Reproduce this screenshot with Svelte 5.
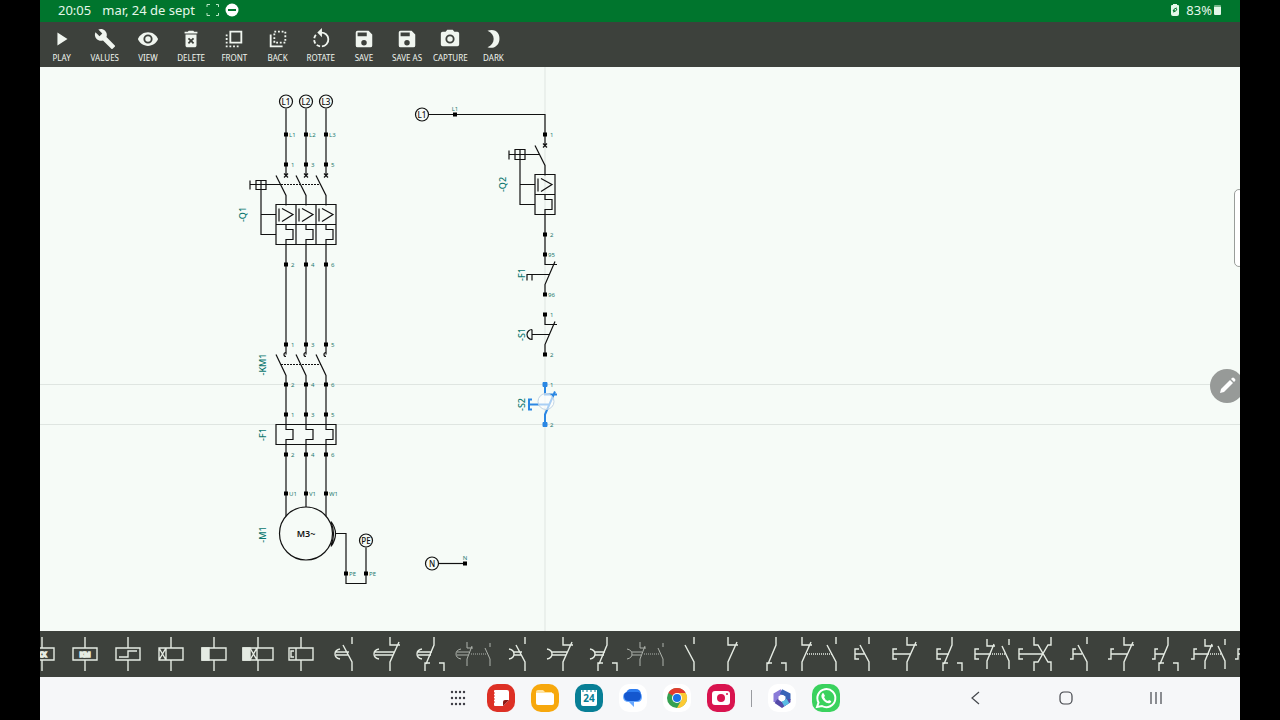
<script lang="ts">
    type Terminal = { x: number; y: number; label: string; above?: boolean };
    type Glyph = { d: string; thin?: boolean; dots?: string; fill?: string; text?: string; tx?: number };

    const phases = [286, 306, 326];

    // One row of terminals, a label for each phase
    function row(y: number, labels: string[]): Terminal[] {
        return labels.map((label, i) => ({ x: phases[i], y, label }));
    }

    const terminals: Terminal[] = [
        ...row(134, ["L1", "L2", "L3"]),
        ...row(164, ["1", "3", "5"]),
        ...row(264, ["2", "4", "6"]),
        ...row(344, ["1", "3", "5"]),
        ...row(384, ["2", "4", "6"]),
        ...row(414, ["1", "3", "5"]),
        ...row(454, ["2", "4", "6"]),
        ...row(493, ["U1", "V1", "W1"]),
        { x: 346, y: 573, label: "PE" },
        { x: 366, y: 573, label: "PE" },
        { x: 455, y: 114, label: "L1", above: true },
        { x: 465, y: 563, label: "N", above: true },
        { x: 545, y: 134, label: "1" },
        { x: 545, y: 234, label: "2" },
        { x: 545, y: 254, label: "95" },
        { x: 545, y: 294, label: "96" },
        { x: 545, y: 314, label: "1" },
        { x: 545, y: 354, label: "2" },
    ];

    const sources = [
        { x: 286, y: 101, label: "L1" },
        { x: 306, y: 101, label: "L2" },
        { x: 326, y: 101, label: "L3" },
        { x: 422, y: 114, label: "L1" },
        { x: 366, y: 540, label: "PE" },
        { x: 432, y: 563, label: "N" },
    ];

    const names = [
        { x: 246, y: 214, label: "-Q1" },
        { x: 266, y: 364, label: "-KM1" },
        { x: 266, y: 434, label: "-F1" },
        { x: 266, y: 534, label: "-M1" },
        { x: 506, y: 184, label: "-Q2" },
        { x: 525, y: 274, label: "-F1" },
        { x: 525, y: 334, label: "-S1" },
        { x: 525, y: 404, label: "-S2" },
    ];

    const tools = [
        "Play", "Values", "View", "Delete", "Front", "Back",
        "Rotate", "Save", "Save as", "Capture", "Dark",
    ];

    // Contact shapes for the palette, drawn around 0,0
    const open = (x: number) => `M${x} -17V-10M${x - 9} -9L${x} 8V17`;
    const closed = (x: number) => `M${x} -17V-9H${x + 10}M${x + 9} -12L${x} 8V17`;
    const change = (x: number) =>
        `M${x} -17V-9L${x - 8} 10M${x - 4} 9H${x - 9}V17M${x + 5} 9H${x + 10}V17`;
    const delayOn = (x: number, to: number) =>
        `M${x + 5} -5Q${x} -4 ${x} 0Q${x} 4 ${x + 5} 5M${x + 1} -2H${to + 1}M${x + 1} 1H${to}`;
    const delayOff = (x: number, to: number) =>
        `M${x} -5Q${x + 5} -4 ${x + 5} 0Q${x + 5} 4 ${x} 5M${x + 5} -2H${to + 1}M${x + 5} 1H${to}`;
    const push = (x: number, to: number) => `M${x + 4} -5H${x}V5H${x + 4}M${x} 0H${to}`;
    const turn = (x: number, to: number) => `M${x + 5} -5H${x + 2}V5H${x - 1}M${x + 2} 0H${to}`;
    const smallPair =
        "M-6 -12V-6H0M-1 -8L-6 5V12M17 -11V-7M12 -6L17 5V12";
    const midPair = (x: number) =>
        `M${x} -15V-8H${x + 8}M${x + 7} -10L${x} 7V15M17 -15V-9M10 -8L17 7V15`;
    const coil = "M-12 -6H12V6H-12ZM0 -17V-6M0 6V17";

    const palette: Glyph[] = [
        { d: coil, text: "KX", tx: 0 },
        { d: coil, text: "KM", tx: 0 },
        { d: coil + "M-9 3H0V-3H9" },
        { d: coil + "M-5 -6V6M-12 -6L-5 6M-5 -6L-12 6" },
        { d: coil, fill: "M-12 -6H-5V6H-12Z" },
        {
            d: "M-15 -6H15V6H-15ZM0 -17V-6M0 6V17M-1 -6V6M-8 -6L-1 6M-1 -6L-8 6",
            fill: "M-15 -6H-8V6H-15Z",
        },
        { d: coil + "M-5 -6V6M-7 -3H-10V3H-7" },
        { d: open(8) + delayOn(-9, 4) },
        { d: closed(3) + delayOn(-13, 6) },
        { d: change(4) + delayOn(-13, 1) },
        { d: smallPair + delayOn(-17, -5), thin: true, dots: "M-2 0H14" },
        { d: open(8) + delayOff(-8, 4) },
        { d: closed(3) + delayOff(-13, 6) },
        { d: change(4) + delayOff(-13, 1) },
        { d: smallPair + delayOff(-19, -5), thin: true, dots: "M-2 0H14" },
        { d: open(5) },
        { d: closed(-5) },
        { d: change(0) },
        { d: closed(-17) + open(17), dots: "M-12 0H13" },
        { d: open(7) + push(-7, 3) },
        { d: closed(2) + push(-12, 6) },
        { d: change(3) + push(-12, 0) },
        { d: midPair(-5) + push(-17, -1), dots: "M0 0H13" },
        {
            d: push(-16, 8) +
                "M-1 -17V-9H3L13 8H16V17M16 -17V-9H13L3 8H-1V17",
        },
        { d: open(9) + turn(-7, 4) },
        { d: closed(3) + turn(-12, 7) },
        { d: change(4) + turn(-11, 0) },
        { d: midPair(-3) + turn(-16, 1), dots: "M2 0H13" },
        { d: open(9) + turn(-15, 4) },
    ];
</script>

<svelte:head>
    <title>Circuit editor</title>
</svelte:head>

{#snippet thermal(x: number, y: number)}
    <path d="M{x} {y}v5h7v10h-7v5" />
{/snippet}

{#snippet trip(x: number, y: number)}
    <path d="M{x - 7} {y + 4}v13M{x - 4} {y + 4}l11 6l-11 7" />
{/snippet}

<div class="screen">
    <header class="status">
        <span>20:05</span>
        <span class="date">mar, 24 de sept</span>
        <svg width="14" height="14" viewBox="0 0 14 14" fill="none" stroke="#b9e6c5">
            <path d="M1 4V1.5H4M10 1.5H12.500V4M12.500 10V12.500H10M4 12.500H1V10" />
        </svg>
        <svg width="14" height="14" viewBox="0 0 14 14">
            <circle cx="7" cy="7" r="6.500" fill="#fff" />
            <path d="M3 7H11" stroke="#00752d" stroke-width="2" />
        </svg>
        <span class="battery">
            <svg width="8" height="12" viewBox="0 0 8 12">
                <path d="M2 0H6V1H7Q8 1 8 2V10Q8 12 6 12H2Q0 12 0 10V2Q0 1 1 1H2Z" fill="#e4f7e9" />
                <path d="M6 4Q3 4 2 7L4 6M2 8Q5 8 6 5" stroke="#00752d" fill="none" />
            </svg>
            83%
            <svg class="cell" width="8" height="12" viewBox="0 0 8 12">
                <path d="M1 1H6Q7 1 7 2V4H0V2Q0 1 1 1Z" fill="#79b98c" />
                <path d="M0 3H7V10Q7 11 6 11H1Q0 11 0 10Z" fill="#e4f7e9" />
            </svg>
        </span>
    </header>

    <nav class="toolbar">
        {#each tools as tool}
            <button>
                <svg width="22" height="22" viewBox="0 0 24 24" fill="currentColor">
                    {#if tool === "Play"}
                        <path d="M7 5V19L18 12Z" />
                    {:else if tool === "Values"}
                        <path d="M22.700 19L13.600 9.900C14.500 7.600 14 4.900 12.100 3C10.100 1 7.100 .6 4.700 1.700L9 6L6 9L1.600 4.700C.4 7.100 .9 10.100 2.900 12.100C4.800 14 7.500 14.500 9.800 13.600L18.900 22.700C19.300 23.100 19.900 23.100 20.300 22.700L22.600 20.400C23.100 20 23.100 19.300 22.700 19Z" />
                    {:else if tool === "View"}
                        <path d="M12 4.500C7 4.500 2.700 7.600 1 12C2.700 16.400 7 19.500 12 19.500S21.300 16.400 23 12C21.300 7.600 17 4.500 12 4.500ZM12 17A5 5 0 1 1 12 7A5 5 0 0 1 12 17ZM12 9A3 3 0 1 0 12 15A3 3 0 0 0 12 9Z" fill-rule="evenodd" />
                    {:else if tool === "Delete"}
                        <path d="M6 19C6 20.100 6.900 21 8 21H16C17.100 21 18 20.100 18 19V7H6ZM8.500 11.900L9.900 10.500L12 12.600L14.100 10.500L15.500 11.900L13.400 14L15.500 16.100L14.100 17.500L12 15.400L9.900 17.500L8.500 16.100L10.600 14ZM15.500 4L14.500 3H9.500L8.500 4H5V6H19V4Z" fill-rule="evenodd" />
                    {:else if tool === "Front"}
                        <path d="M8 4H20V16H8Z" fill="none" stroke="currentColor" stroke-width="2" />
                        <path d="M4 7V20H18" fill="none" stroke="currentColor" stroke-width="2" stroke-dasharray="2 2" />
                    {:else if tool === "Back"}
                        <path d="M8 4H20V16H8Z" fill="none" stroke="currentColor" stroke-width="2" stroke-dasharray="2 2" />
                        <path d="M4 7V20H17" fill="none" stroke="currentColor" stroke-width="2" />
                    {:else if tool === "Rotate"}
                        <path d="M12 5A7.500 7.500 0 0 1 13 20" fill="none" stroke="currentColor" stroke-width="2" />
                        <path d="M11 20A7.500 7.500 0 0 1 7 7" fill="none" stroke="currentColor" stroke-width="2" stroke-dasharray="4 2" />
                        <path d="M13 0V10L8 5Z" />
                    {:else if tool === "Save" || tool === "Save as"}
                        <path d="M17 3H5A2 2 0 0 0 3 5V19A2 2 0 0 0 5 21H19A2 2 0 0 0 21 19V7ZM12 19A3 3 0 1 1 12 13A3 3 0 0 1 12 19ZM15 9H5V5H15Z" fill-rule="evenodd" />
                    {:else if tool === "Capture"}
                        <path d="M9 2L7.200 4H4A2 2 0 0 0 2 6V18A2 2 0 0 0 4 20H20A2 2 0 0 0 22 18V6A2 2 0 0 0 20 4H16.800L15 2ZM12 17A5 5 0 1 1 12 7A5 5 0 0 1 12 17ZM12 9A3 3 0 1 0 12 15A3 3 0 0 0 12 9Z" fill-rule="evenodd" />
                    {:else}
                        <path d="M6 3C15 0 20 6 19 13C18 20 12 23 6 21C15 17 15 7 6 3Z" />
                    {/if}
                </svg>
                <span>{tool}</span>
            </button>
        {/each}
    </nav>

    <main class="canvas">
        <svg class="drawing" width="100%" height="100%">
            <g transform="translate(-40 -66.5)">
                <path class="guide" d="M545 60V1600M0 384H3000M0 424H3000" />

                <g class="wire">
                    <!-- power circuit -->
                    {#each phases as x}
                        <path d="M{x} 108V175M{x - 2} 173l4 4m0 -4l-4 4" />
                        <path d="M{x - 10} 175L{x} 195V205M{x} 244V354" />
                        <path d="M{x - 10} 354L{x} 375V424M{x} 444V516" />
                        <path d="M{x} 352a2 2 0 1 0 0 4" />
                        {@render trip(x, 204)}
                        {@render thermal(x, 224)}
                        {@render thermal(x, 424)}
                    {/each}
                    <path d="M276 204H336V244H276ZM276 224H336M296 204V244M316 204V244" />
                    <path d="M250 180V189M250 184H281M256 180H266V189H256ZM261 180V234H276M261 214H276" />
                    <path class="dotted" d="M281 184H321M281 364H321" />
                    <path d="M276 424H336V444H276Z" />
                    <path d="M331 521Q340 533 331 546M331 522Q336 533 331 545M335 533H346V583H366V547" />

                    <!-- control circuit -->
                    <path d="M429 114H545V145M543 143l4 4m0 -4l-4 4" />
                    <path d="M535 145L545 165V175M545 214V264H557" />
                    <path d="M535 174H555V214H535ZM535 194H555" />
                    {@render trip(545, 174)}
                    {@render thermal(545, 194)}
                    <path d="M509 150V159M509 154H540M515 149H525V159H515ZM520 149V204H535M520 184H535" />
                    <path d="M555 261L545 284V294M550 274H527V280M532 274V280" />
                    <path d="M545 314V324H557M555 321L545 344V354M550 334H532" />
                    <path d="M532 329V339A5 5 0 0 1 532 329" />
                    <path d="M439 563H465" />
                </g>

                <circle class="motor" cx="306" cy="533" r="26.500" />
                <text class="motor-label" x="306" y="536">M3~</text>

                <g class="selected">
                    <path d="M545 384V394H557M555 391L545 414V424M549 404H529M532 399H529V409H532" />
                    <path class="end" d="M543 382h4v4h-4zM543 422h4v4h-4z" />
                    <text class="pin" x="550" y="386">1</text>
                    <text class="pin" x="550" y="426">2</text>
                    <circle cx="546" cy="401" r="8" />
                </g>

                {#each terminals as t}
                    <rect x={t.x - 2} y={t.y - 2} width="4" height="4" />
                    {#if t.above}
                        <text class="pin middle" x={t.x} y={t.y - 4}>{t.label}</text>
                    {:else}
                        <text class="pin" x={t.x + (t.label.length > 1 ? 3 : 5)} y={t.y + 2}>{t.label}</text>
                    {/if}
                {/each}

                {#each sources as s}
                    <circle class="source" cx={s.x} cy={s.y} r="6.500" />
                    <text class="source-label" x={s.x} y={s.y + 3}>{s.label}</text>
                {/each}

                {#each names as n}
                    <text class="name" transform="translate({n.x} {n.y}) rotate(-90)">{n.label}</text>
                {/each}
            </g>
        </svg>

        <div class="edge-handle"></div>
        <button class="pen" aria-label="Edit">
            <svg width="20" height="20" viewBox="0 0 20 20">
                <path d="M3 17L4 13L13 4L16 7L7 16Z" fill="#fff" />
                <path d="M14 3L15 2Q16 1 17 2L18 3Q19 4 18 5L17 6Z" fill="#fff" />
            </svg>
        </button>
    </main>

    <nav class="palette">
        {#each palette as p, i}
            <button aria-label="Symbol {i + 1}">
                <svg class:thin={p.thin} width="44" height="44" viewBox="-22 -22 44 44">
                    {#if p.fill}<path class="solid" d={p.fill} />{/if}
                    <path d={p.d} />
                    {#if p.dots}<path class="dots" d={p.dots} />{/if}
                    {#if p.text}<text x={p.tx} y="3">{p.text}</text>{/if}
                </svg>
            </button>
        {/each}
    </nav>

    <footer class="dock">
        <div class="apps">
            <button class="drawer" aria-label="All apps">
                <svg width="16" height="16" viewBox="0 0 16 16" fill="#3c3c44">
                    {#each [2, 8, 14] as cy}
                        {#each [2, 6, 10, 14] as cx}
                            <circle {cx} {cy} r="1.200" />
                        {/each}
                    {/each}
                </svg>
            </button>
            <button class="app notes" aria-label="Notes">
                <svg width="28" height="28" viewBox="0 0 28 28">
                    <path d="M8 6H20Q22 6 22 8V16L16 22H8Q7 22 7 21V7Q7 6 8 6Z" fill="#fff" />
                    <path d="M22 16L16 22V18Q16 16 18 16Z" fill="#8d1914" />
                    <path d="M6 9H8M6 12H8M6 15H8M6 18H8" stroke="#dd3025" />
                </svg>
            </button>
            <button class="app files" aria-label="Files">
                <svg width="28" height="28" viewBox="0 0 28 28">
                    <path d="M7 6H12L14 8H21V12H5V8Q5 6 7 6Z" fill="#ffe3a0" />
                    <path d="M5 9H21Q23 9 23 11V19Q23 21 21 21H7Q5 21 5 19Z" fill="#fff" />
                </svg>
            </button>
            <button class="app calendar" aria-label="Calendar">
                <svg width="28" height="28" viewBox="0 0 28 28">
                    <path d="M6 6H22V20Q22 22 20 22H8Q6 22 6 20Z" fill="#fff" />
                    <path d="M8 5V8M12 5V8M16 5V8M20 5V8" stroke="#087f96" />
                    <text x="14" y="18">24</text>
                </svg>
            </button>
            <button class="app plain" aria-label="Messages">
                <svg width="28" height="28" viewBox="0 0 28 28">
                    <rect x="7" y="5" width="15" height="11" rx="5" fill="#2d7cf0" />
                    <path d="M10 8H18Q23 8 23 13Q23 18 18 18H15V23L10 18Q4 18 4 13Q4 8 10 8Z" fill="#68a8ff" />
                    <path d="M9 8H19Q22 8 22 12Q22 17 17 17H10Q5 17 5 12Q5 8 9 8Z" fill="#1457cf" />
                </svg>
            </button>
            <button class="app plain" aria-label="Chrome">
                <svg width="28" height="28" viewBox="0 0 28 28">
                    <circle cx="14" cy="14" r="10" fill="#34a050" />
                    <path d="M14 14L5.300 9A10 10 0 0 1 22.700 9Z" fill="#e33b2e" />
                    <path d="M14 9H22.700A10 10 0 0 1 14 24L18.500 16Z" fill="#fcc934" />
                    <circle cx="14" cy="14" r="5" fill="#fff" />
                    <circle cx="14" cy="14" r="4" fill="#1a73e8" />
                </svg>
            </button>
            <button class="app camera" aria-label="Camera">
                <svg width="28" height="28" viewBox="0 0 28 28">
                    <rect x="5" y="7" width="18" height="14" rx="3" fill="#fff" />
                    <circle cx="14" cy="14" r="4" fill="#d9144f" />
                    <circle cx="20" cy="10" r="1" fill="#d9144f" />
                </svg>
            </button>
            <span class="divider"></span>
            <button class="app plain" aria-label="Office">
                <svg width="28" height="28" viewBox="0 0 28 28" fill="none" stroke-width="5">
                    <path d="M8 18V11L14 7.500" stroke="#8a7bd8" />
                    <path d="M13 7.500L20 11V16" stroke="#3a64b8" />
                    <path d="M20 15V17L14 21L8 17" stroke="#544aa8" />
                    <path d="M15 20L20 17" stroke="#59bce4" />
                    <circle cx="14" cy="14" r="3" fill="#fff" stroke="none" />
                </svg>
            </button>
            <button class="app whatsapp" aria-label="WhatsApp">
                <svg width="28" height="28" viewBox="0 0 28 28">
                    <path d="M5 23L6.500 18.500A9 9 0 1 1 10 22Z" fill="none" stroke="#fff" stroke-width="2" />
                    <path d="M10 10Q11 8 12 10L13 12L12 13Q13 16 16 17L17 16L19 17Q20 18 18 19Q15 20 12 17Q8 13 10 10Z" fill="#fff" />
                </svg>
            </button>
        </div>
        <div class="keys">
            <button aria-label="Back">
                <svg width="16" height="16" viewBox="0 0 16 16"><path d="M11 2L4 8L11 14" /></svg>
            </button>
            <button aria-label="Home">
                <svg width="16" height="16" viewBox="0 0 16 16"><rect x="2" y="2" width="12" height="12" rx="4" /></svg>
            </button>
            <button aria-label="Recents">
                <svg width="16" height="16" viewBox="0 0 16 16"><path d="M3 2V14M8 2V14M13 2V14" /></svg>
            </button>
        </div>
    </footer>
</div>

<style>
    :global(body) {
        background: #000;
    }

    .screen {
        display: flex;
        flex-direction: column;
        height: 100vh;
        margin: 0 40px;
        overflow: hidden;
        font-family: "Noto Sans", "Open Sans", sans-serif;
    }

    button {
        display: flex;
        align-items: center;
        justify-content: center;
        padding: 0;
        border: none;
        background: none;
        color: inherit;
        font-family: inherit;
    }

    .status {
        display: flex;
        align-items: center;
        gap: 5px;
        height: 20px;
        padding: 0 18px 2px;
        background: #00752d;
        color: #e4f7e9;
        font-size: 13px;
        line-height: 20px;
    }

    .date {
        margin: 0 6px;
    }

    .battery {
        display: flex;
        align-items: center;
        gap: 7px;
        margin-left: auto;
    }

    .cell {
        margin-left: -5px;
    }

    .toolbar {
        display: flex;
        height: 45px;
        background: #3d413c;
        color: #f0f5ef;
    }

    .toolbar button {
        flex: 0 0 3.6%;
        flex-direction: column;
        gap: 3px;
        min-width: 0;
        padding-top: 1px;
    }

    .toolbar span {
        font-size: 8px;
        line-height: 10px;
        text-transform: uppercase;
        white-space: nowrap;
    }

    .canvas {
        position: relative;
        flex: 1;
        min-height: 0;
        overflow: hidden;
        background: #f6fbf7;
    }

    .drawing {
        display: block;
    }

    .guide {
        stroke: #dfe5e1;
    }

    .wire {
        fill: none;
        stroke: #111;
        stroke-width: 1.2;
    }

    .dotted {
        stroke-dasharray: 2 1;
    }

    .motor,
    .source {
        fill: #f6fbf7;
        stroke: #111;
        stroke-width: 1.2;
    }

    .motor-label,
    .source-label {
        fill: #111;
        font-weight: 600;
        text-anchor: middle;
    }

    .motor-label {
        font-size: 9px;
    }

    .source-label {
        font-size: 8px;
        font-weight: 500;
    }

    .pin {
        fill: #23796f;
        font-size: 6px;
    }

    .middle {
        text-anchor: middle;
    }

    .name {
        fill: #0b776f;
        font-size: 9px;
        font-weight: 500;
        text-anchor: middle;
    }

    .selected path {
        fill: none;
        stroke: #2b87e3;
        stroke-width: 2;
    }

    .selected .end {
        fill: #2b87e3;
        stroke-width: 1;
    }

    .selected circle {
        fill: #fff9;
        stroke: #c3d5e6;
    }

    .edge-handle {
        position: absolute;
        top: 122px;
        right: -4px;
        width: 8px;
        height: 76px;
        border: 1px solid #999d9a;
        border-radius: 5px;
        background: #fff;
    }

    .pen {
        position: absolute;
        top: 302px;
        right: -4px;
        width: 34px;
        height: 34px;
        border-radius: 50%;
        background: #979a98;
    }

    .palette {
        display: flex;
        height: 46px;
        overflow: hidden;
        background: #3d413c;
    }

    .palette button {
        flex: 0 0 3.6%;
        min-width: 0;
    }

    .palette button:first-child {
        margin-left: -20px;
    }

    .palette svg {
        flex: none;
        overflow: visible;
        fill: none;
        stroke: #e5ebe3;
        stroke-width: 1.4;
    }

    .palette .thin {
        stroke: #aeb3ac;
        stroke-width: 1;
    }

    .palette .solid {
        fill: #e5ebe3;
    }

    .palette .dots {
        stroke-dasharray: 1 1;
    }

    .palette text {
        fill: #e5ebe3;
        font-size: 7px;
        font-weight: 700;
        text-anchor: middle;
    }

    .dock {
        display: grid;
        grid-template-columns: 1fr auto 1fr;
        align-items: center;
        height: 42px;
        padding: 0 0 1px 5px;
        background: #f6f7f9;
    }

    .apps {
        display: flex;
        grid-column: 2;
        align-items: center;
        gap: 16px;
    }

    .drawer {
        width: 26px;
        height: 28px;
    }

    .app {
        width: 28px;
        height: 28px;
        border-radius: 10px;
    }

    .notes {
        background: #dd3025;
    }

    .files {
        background: #f7a80d;
    }

    .calendar {
        background: #087f96;
    }

    .calendar text {
        fill: #087f96;
        font-size: 10px;
        font-weight: 700;
        text-anchor: middle;
    }

    .plain {
        background: #fff;
    }

    .camera {
        background: #d9144f;
    }

    .whatsapp {
        background: #3ad25e;
    }

    .divider {
        width: 1px;
        height: 17px;
        background: #999ba0;
    }

    .keys {
        display: flex;
        justify-content: flex-end;
        padding-right: 39px;
    }

    .keys button {
        width: 90px;
        height: 28px;
    }

    .keys svg {
        fill: none;
        stroke: #44474c;
        stroke-width: 1.2;
    }
</style>
